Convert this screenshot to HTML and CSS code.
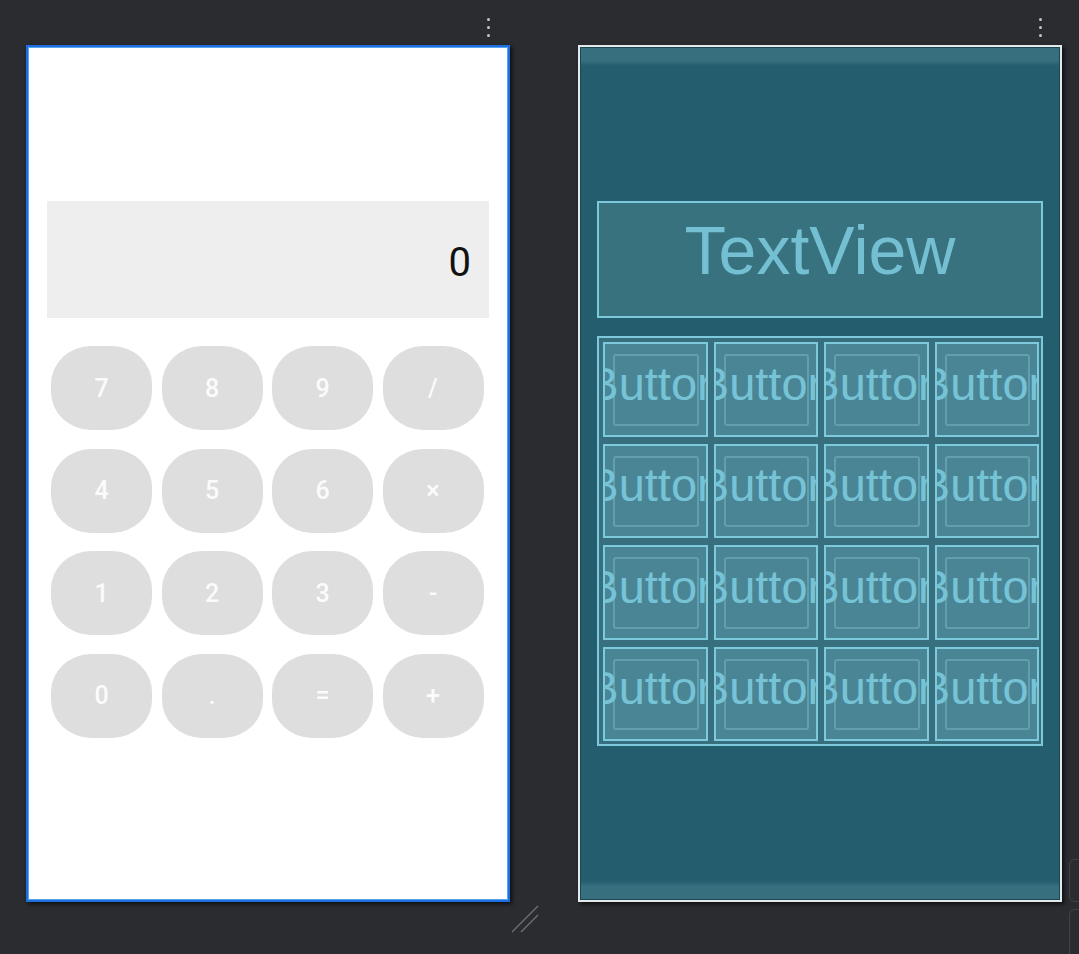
FILE: index.html
```html
<!DOCTYPE html>
<html lang="en">
<head>
<meta charset="utf-8">
<title>Layout preview</title>
<link rel="stylesheet" href="styles.css">
</head>
<body>
<main class="workspace">
  <section class="device">
    <div class="device-head"><span class="kebab"><i></i><i></i><i></i></span></div>
    <div class="screen design">
      <div class="display">0</div>
      <div class="keypad">
        <div class="key-cell"><button class="key">7</button></div>
        <div class="key-cell"><button class="key">8</button></div>
        <div class="key-cell"><button class="key">9</button></div>
        <div class="key-cell"><button class="key">/</button></div>
        <div class="key-cell"><button class="key">4</button></div>
        <div class="key-cell"><button class="key">5</button></div>
        <div class="key-cell"><button class="key">6</button></div>
        <div class="key-cell"><button class="key">×</button></div>
        <div class="key-cell"><button class="key">1</button></div>
        <div class="key-cell"><button class="key">2</button></div>
        <div class="key-cell"><button class="key">3</button></div>
        <div class="key-cell"><button class="key">-</button></div>
        <div class="key-cell"><button class="key">0</button></div>
        <div class="key-cell"><button class="key">.</button></div>
        <div class="key-cell"><button class="key">=</button></div>
        <div class="key-cell"><button class="key">+</button></div>
      </div>
    </div>
  </section>
  <section class="device">
    <div class="device-head"><span class="kebab"><i></i><i></i><i></i></span></div>
    <div class="screen blueprint">
      <div class="bp-textview">TextView</div>
      <div class="bp-grid">
        <div class="bp-cell"><span class="bp-rect"></span><span class="bp-label"><span>Button</span></span></div>
        <div class="bp-cell"><span class="bp-rect"></span><span class="bp-label"><span>Button</span></span></div>
        <div class="bp-cell"><span class="bp-rect"></span><span class="bp-label"><span>Button</span></span></div>
        <div class="bp-cell"><span class="bp-rect"></span><span class="bp-label"><span>Button</span></span></div>
        <div class="bp-cell"><span class="bp-rect"></span><span class="bp-label"><span>Button</span></span></div>
        <div class="bp-cell"><span class="bp-rect"></span><span class="bp-label"><span>Button</span></span></div>
        <div class="bp-cell"><span class="bp-rect"></span><span class="bp-label"><span>Button</span></span></div>
        <div class="bp-cell"><span class="bp-rect"></span><span class="bp-label"><span>Button</span></span></div>
        <div class="bp-cell"><span class="bp-rect"></span><span class="bp-label"><span>Button</span></span></div>
        <div class="bp-cell"><span class="bp-rect"></span><span class="bp-label"><span>Button</span></span></div>
        <div class="bp-cell"><span class="bp-rect"></span><span class="bp-label"><span>Button</span></span></div>
        <div class="bp-cell"><span class="bp-rect"></span><span class="bp-label"><span>Button</span></span></div>
        <div class="bp-cell"><span class="bp-rect"></span><span class="bp-label"><span>Button</span></span></div>
        <div class="bp-cell"><span class="bp-rect"></span><span class="bp-label"><span>Button</span></span></div>
        <div class="bp-cell"><span class="bp-rect"></span><span class="bp-label"><span>Button</span></span></div>
        <div class="bp-cell"><span class="bp-rect"></span><span class="bp-label"><span>Button</span></span></div>
      </div>
    </div>
  </section>
</main>
<svg class="resize-handle" width="30" height="32" viewBox="0 0 30 32">
  <line x1="2" y1="29" x2="28" y2="3" stroke="#707174" stroke-width="1.3"/>
  <line x1="11" y1="29" x2="28" y2="12" stroke="#707174" stroke-width="1.3"/>
</svg>
<div class="side-ctl side-ctl-a"></div>
<div class="side-ctl side-ctl-b"></div>
</body>
</html>
```
FILE: styles.css
```css
* { box-sizing: border-box; }

html, body {
  margin: 0;
  height: 100%;
  background: #2b2c30;
  overflow: hidden;
}

body {
  font-family: Roboto, "Liberation Sans", sans-serif;
}

.workspace {
  display: flex;
  gap: 68px;
  padding-left: 26px;
}

.device {
  width: 484px;
  display: flex;
  flex-direction: column;
}

.device-head {
  height: 45px;
  display: flex;
  justify-content: flex-end;
  padding: 18px 20px 0 0;
}

.kebab {
  display: flex;
  flex-direction: column;
  gap: 5px;
}

.kebab i {
  display: block;
  width: 3px;
  height: 3px;
  border-radius: 50%;
  background: #c4c6ca;
}

.screen {
  height: 857px;
  box-shadow: 2px 2px 4px rgba(0, 0, 0, 0.7);
}

/* ---------- design surface ---------- */
.design {
  background: #ffffff;
  border: 2px solid #1d6fdd;
  padding: 154px 19px 0 19px;
  box-shadow: inset 0 0 0 1px #5aa2f2, 2px 2px 4px rgba(0, 0, 0, 0.7);
}

.display {
  height: 117px;
  background: #eeeeee;
  display: flex;
  align-items: center;
  justify-content: flex-end;
  padding: 5px 18px 0 0;
  font-size: 40px;
  color: #111111;
}

.keypad {
  margin-top: 18px;
  height: 410px;
  display: grid;
  grid-template-columns: repeat(4, minmax(0, 1fr));
  grid-template-rows: repeat(4, minmax(0, 1fr));
}

.key-cell {
  padding: 10px 5.5px 0 4px;
}

.key {
  display: flex;
  align-items: center;
  justify-content: center;
  width: 101px;
  height: 84px;
  border: 0;
  padding: 0;
  border-radius: 40px / 38px;
  background: #dedede;
  color: #fbfbfb;
  font-family: Roboto, "Liberation Sans", sans-serif;
  font-weight: 500;
  font-size: 25px;
}

/* ---------- blueprint surface ---------- */
.blueprint {
  border: 2px solid #e2eaec;
  padding: 154px 17px 0 17px;
  background: linear-gradient(to bottom,
    #386f7e 0, #386f7e 14px, #2a6373 17px, #245d6e 19px,
    #245d6e calc(100% - 19px), #2a6373 calc(100% - 17px), #386f7e calc(100% - 14px), #386f7e 100%);
  box-shadow: inset 0 0 0 1px #1c4854, 2px 2px 4px rgba(0, 0, 0, 0.7);
  font-family: "Liberation Sans", Arial, sans-serif;
}

.bp-textview {
  height: 117px;
  width: 446px;
  border: 2px solid #7ec8dc;
  background: #38727f;
  color: #75bfd2;
  font-size: 68px;
  display: flex;
  align-items: center;
  justify-content: center;
  padding-bottom: 20px;
}

.bp-grid {
  margin-top: 18px;
  width: 446px;
  height: 410px;
  border: 2px solid #7ec8dc;
  background: #386f7f;
  display: grid;
  grid-template-columns: repeat(4, minmax(0, 1fr));
  grid-template-rows: repeat(4, minmax(0, 1fr));
}

.bp-cell {
  margin: 4px 2px 3px 4px;
  border: 2px solid #7ecadd;
  background: #4a8596;
  overflow: hidden;
  display: grid;
  grid-template-columns: minmax(0, 1fr);
  grid-template-rows: minmax(0, 1fr);
}

.bp-cell > * {
  grid-area: 1 / 1;
}

.bp-rect {
  margin: 10px 7px 9px 8px;
  border: 2px solid #629fae;
  border-radius: 3px;
}

.bp-label {
  display: flex;
  align-items: center;
  justify-content: center;
  min-width: 0;
  padding-bottom: 12px;
  color: #77c3d6;
  font-size: 47px;
  line-height: 1;
}

.bp-label span {
  white-space: nowrap;
  flex: none;
}

/* ---------- IDE chrome overlays ---------- */
.resize-handle {
  position: absolute;
  left: 510px;
  top: 903px;
}

.side-ctl {
  position: absolute;
  left: 1069px;
  width: 30px;
  border: 1.5px solid #404246;
  border-radius: 6px;
}

.side-ctl-a {
  top: 859px;
  height: 43px;
}

.side-ctl-b {
  top: 909px;
  height: 60px;
}
```
